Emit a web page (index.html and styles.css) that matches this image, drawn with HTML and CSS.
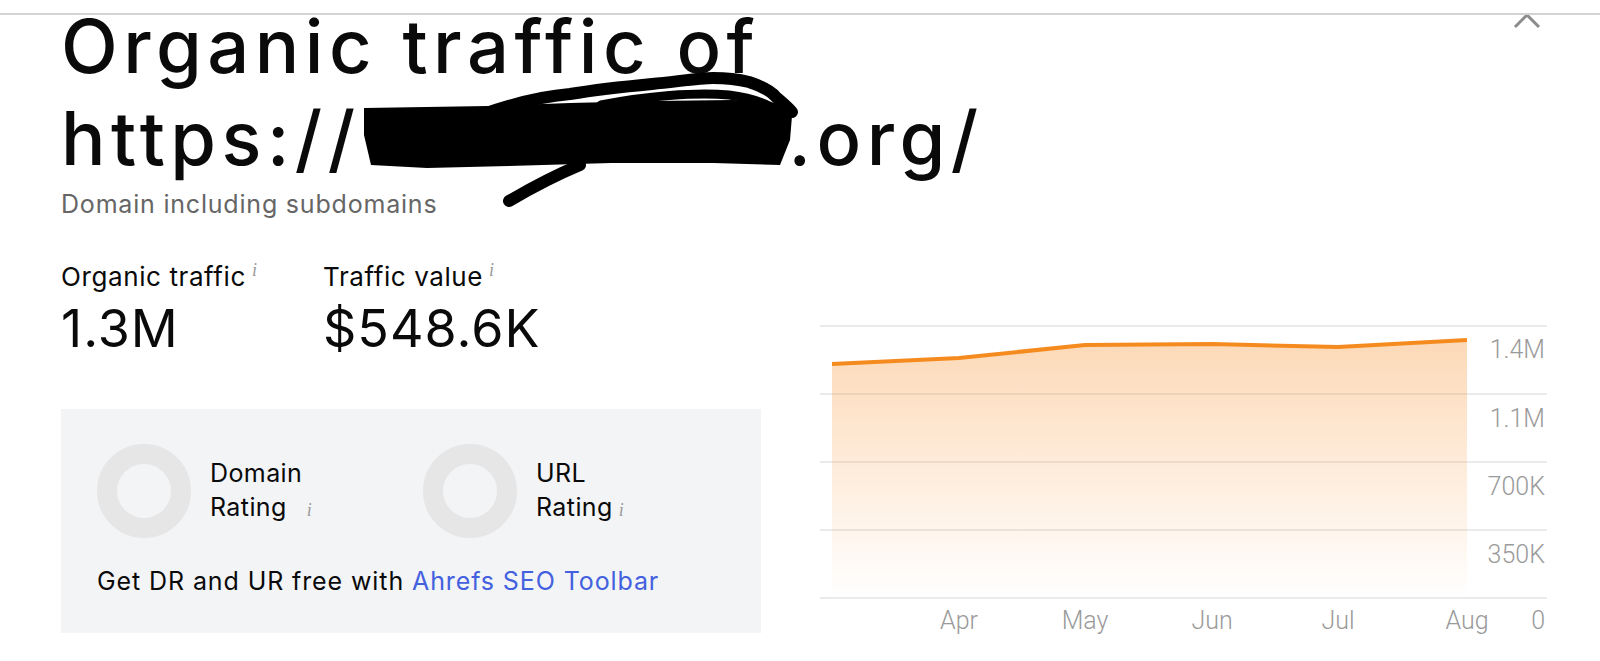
FILE: index.html
```html
<!DOCTYPE html>
<html lang="en">
<head>
<meta charset="utf-8">
<title>Organic traffic</title>
<link rel="stylesheet" href="styles.css">
</head>
<body>
<div class="panel">
  <span class="close" aria-label="Close">
    <svg width="28" height="28" viewBox="0 0 28 28"><path d="M2 2 L26 26 M26 2 L2 26" stroke="#8c8c8c" stroke-width="3" fill="none"/></svg>
  </span>
  <header class="head">
    <h1 class="title">Organic traffic of<br>https://<span class="redacted"><svg class="scribble" width="450" height="140" viewBox="0 0 450 140">
      <path d="M3 37 L127 35 L209 32 L291 30 L372 29 L418 32 L431 45 L429 69 L419 94 L352 92 L250 92 L148 95 L66 97 L10 94 L3 64 Z" fill="#000"/>
      <path d="M117 45 C150 33 185 25 209 23 C240 18 270 15 291 13 C320 10 340 7 352 7 C368 7 380 9 388 11 C400 15 410 20 415 26 C422 32 428 37 431 41" stroke="#000" stroke-width="12" fill="none" stroke-linecap="round"/>
      <path d="M240 34 C285 25 335 21 368 24 C392 27 408 33 420 42" stroke="#000" stroke-width="9" fill="none" stroke-linecap="round"/>
      <path d="M219 94 C195 104 172 116 148 130" stroke="#000" stroke-width="12" fill="none" stroke-linecap="round"/>
    </svg></span>.org/</h1>
    <p class="sub">Domain including subdomains</p>
  </header>
  <div class="body">
    <div class="left">
      <div class="stats">
        <div class="stat">
          <div class="stat-label">Organic traffic<span class="info sup">i</span></div>
          <div class="stat-value">1.3M</div>
        </div>
        <div class="stat">
          <div class="stat-label">Traffic value<span class="info sup">i</span></div>
          <div class="stat-value">$548.6K</div>
        </div>
      </div>
      <div class="ratings">
        <div class="rating-row">
          <div class="rating">
            <span class="ring"></span>
            <span class="rating-label">Domain<br>Rating<span class="info wide">i</span></span>
          </div>
          <div class="rating">
            <span class="ring"></span>
            <span class="rating-label">URL<br>Rating<span class="info">i</span></span>
          </div>
        </div>
        <p class="promo">Get DR and UR free with <a href="#" class="link">Ahrefs SEO Toolbar</a></p>
      </div>
    </div>
    <div class="chart">
      <svg width="734" height="324" viewBox="0 0 734 324">
        <defs>
          <linearGradient id="fade" x1="0" y1="0" x2="0" y2="1">
            <stop offset="0" stop-color="#f7891e" stop-opacity="0.32"/>
            <stop offset="1" stop-color="#f7891e" stop-opacity="0"/>
          </linearGradient>
        </defs>
        <g stroke="#e4e4e4" stroke-width="1.5">
          <line x1="4" y1="10" x2="731" y2="10"/>
          <line x1="4" y1="78" x2="731" y2="78"/>
          <line x1="4" y1="146" x2="731" y2="146"/>
          <line x1="4" y1="214" x2="731" y2="214"/>
          <line x1="4" y1="282" x2="731" y2="282"/>
        </g>
        <path d="M16 48 L143 42 L269 29 L396 28 L522 31 L651 24 L651 282 L16 282 Z" fill="url(#fade)"/>
        <path d="M16 48 L143 42 L269 29 L396 28 L522 31 L651 24" stroke="#f58b1f" stroke-width="4" fill="none" stroke-linejoin="round"/>
        <g class="axis" text-anchor="end">
          <text x="729" y="42">1.4M</text>
          <text x="729" y="111">1.1M</text>
          <text x="729" y="179">700K</text>
          <text x="729" y="247">350K</text>
          <text x="729" y="313">0</text>
        </g>
        <g class="axis" text-anchor="middle">
          <text x="143" y="313">Apr</text>
          <text x="269" y="313">May</text>
          <text x="396" y="313">Jun</text>
          <text x="522" y="313">Jul</text>
          <text x="651" y="313">Aug</text>
        </g>
      </svg>
    </div>
  </div>
</div>
</body>
</html>
```
FILE: styles.css
```css
* { box-sizing: border-box; }

body {
  margin: 0;
  background: #ffffff;
  font-family: Inter, "Noto Sans", sans-serif;
  color: #0a0a0a;
  overflow: hidden;
}

.panel {
  position: relative;
  margin-top: 13px;
  border-top: 2px solid #d3d3d3;
  padding-left: 61px;
}

.close {
  position: absolute;
  top: 0;
  left: 1513px;
  width: 28px;
  height: 14px;
  overflow: hidden;
}

.close svg {
  display: block;
  margin-top: -14px;
}

.title {
  margin: -14px 0 0;
  font-size: 74px;
  line-height: 90px;
  font-weight: 500;
  letter-spacing: 5.5px;
}

.redacted {
  position: relative;
  display: inline-block;
  width: 428px;
  height: 1em;
}

.scribble {
  position: absolute;
  left: 0;
  top: -20px;
}

.sub {
  margin: 6px 0 0;
  font-size: 25px;
  line-height: 30px;
  letter-spacing: 0.8px;
  color: #666666;
}

.body {
  display: flex;
  gap: 55px;
  margin-top: 35px;
}

.left {
  width: 700px;
  flex: none;
}

.stats {
  display: flex;
}

.stat:first-child {
  width: 262px;
}

.stat-label {
  font-size: 26px;
  line-height: 32px;
  letter-spacing: 0.6px;
}

.stat-value {
  margin-top: 6px;
  font-size: 52px;
  line-height: 60px;
  letter-spacing: 1px;
}

.info {
  font-family: "Liberation Serif", serif;
  font-style: italic;
  font-size: 18px;
  letter-spacing: 0;
  color: #9a9a9a;
  margin-left: 6px;
}

.info.sup {
  vertical-align: 10px;
  margin-left: 6px;
}

.info.wide {
  margin-left: 20px;
}

.ratings {
  margin-top: 50px;
  background: #f3f4f6;
  padding: 35px 36px 36px;
}

.rating-row {
  display: grid;
  grid-template-columns: 326px auto;
}

.rating {
  display: flex;
  align-items: center;
  gap: 19px;
}

.ring {
  width: 94px;
  height: 94px;
  border-radius: 50%;
  border: 20px solid #e6e6e6;
  flex: none;
}

.rating-label {
  font-size: 25px;
  line-height: 34px;
  letter-spacing: 0.4px;
}

.promo {
  margin: 27px 0 0;
  font-size: 25px;
  line-height: 32px;
  letter-spacing: 0.9px;
}

.link {
  color: #4361df;
  text-decoration: none;
}

.chart {
  margin-top: 62px;
}

.chart svg {
  display: block;
}

.axis text {
  font-family: Roboto, "Liberation Sans", sans-serif;
  font-size: 25px;
  font-weight: 300;
  fill: #9a9a9a;
}
```
